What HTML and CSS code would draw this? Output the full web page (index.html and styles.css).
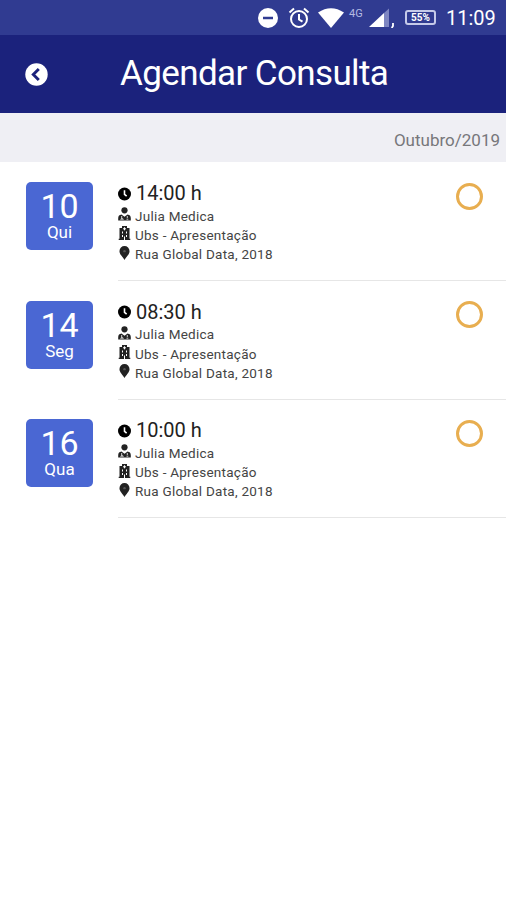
FILE: index.html
```html
<!DOCTYPE html>
<html lang="pt-BR">
<head>
<meta charset="utf-8">
<title>Agendar Consulta</title>
<link rel="stylesheet" href="styles.css">
</head>
<body>
<svg class="defs" width="0" height="0">
  <symbol id="clock" viewBox="0 0 14 14"><circle cx="7" cy="7" r="7"/><path d="M7 3v4.300l2.300 2" fill="none" stroke="#fff" stroke-width="1.700"/></symbol>
  <symbol id="doctor" viewBox="0 0 13 14"><circle cx="6.500" cy="3.300" r="3.100"/><path d="M.2 13.500v-2.300Q.2 8 3.500 7.600l3 2.200 3-2.200q3.300.4 3.300 3.600v2.300z"/><path d="M3.700 9v2.500M3 13v-1.200h2V13M9.300 9v2M8.500 12.200h1.800" fill="none" stroke="#fff" stroke-width=".8"/></symbol>
  <symbol id="hospital" viewBox="0 0 13 14"><path d="M4 0h5v2h2.500v10.800h.8V14H.7v-1.200h.8V2H4z"/><path d="M6.500 1.300v3M5 2.800h3M4.500 5.500v2M8.500 5.500v2M4.500 9v2M8.500 9v2M6.500 10.500V14" fill="none" stroke="#fff" stroke-width="1"/></symbol>
  <symbol id="pin" viewBox="0 0 12 15"><path d="M6 15C4.500 12 .6 9 .6 5.500a5.400 5.400 0 0 1 10.800 0C11.400 9 7.500 12 6 15z"/><circle cx="6" cy="5.500" r="1.300" fill="#555"/></symbol>
</svg>
<div class="status">
  <svg class="dnd" width="20" height="20" viewBox="0 0 20 20"><circle cx="10" cy="10" r="10" fill="#fff"/><path d="M5 10h10" stroke="#303b91" stroke-width="2.500"/></svg>
  <svg class="alarm" width="22" height="22" viewBox="0 0 22 22" fill="none" stroke="#fff" stroke-width="2"><circle cx="11" cy="12" r="8"/><path d="M11 7v5.500l3.500 2.200M1.500 5.500l4.500-4M20.500 5.500l-4.500-4"/></svg>
  <svg class="wifi" width="26" height="20" viewBox="0 0 26 20"><path d="M0 4.500Q13-4 26 4.500L13 20z" fill="#fff"/></svg>
  <span class="net">4G</span>
  <svg class="signal" width="26" height="20" viewBox="0 0 26 20"><path d="M0 19L15 5v14z" fill="#fff"/><path d="M15 5l5-4.500V19h-5z" fill="#7e86c1"/><path d="M24 15v3l-1.300 2" fill="none" stroke="#fff" stroke-width="1.800"/></svg>
  <span class="battery">55%</span>
  <span class="time">11:09</span>
</div>
<header class="bar">
  <svg class="back" width="23" height="23" viewBox="0 0 23 23"><circle cx="11.500" cy="11.500" r="11.200" fill="#fff"/><path d="M13.800 6l-5.500 5.500 5.500 5.500" fill="none" stroke="#1b227c" stroke-width="2.900"/></svg>
  <h1>Agendar Consulta</h1>
</header>
<div class="month"><span>Outubro/2019</span></div>
<main>
  <article class="item">
    <div class="date"><b>10</b><span>Qui</span></div>
    <div class="info">
      <div class="hour"><svg><use href="#clock"/></svg><span>14:00 h</span></div>
      <div class="line who"><svg><use href="#doctor"/></svg><span>Julia Medica</span></div>
      <div class="line unit"><svg><use href="#hospital"/></svg><span>Ubs - Apresentação</span></div>
      <div class="line place"><svg><use href="#pin"/></svg><span>Rua Global Data, 2018</span></div>
      <i class="radio"></i>
    </div>
  </article>
  <article class="item">
    <div class="date"><b>14</b><span>Seg</span></div>
    <div class="info">
      <div class="hour"><svg><use href="#clock"/></svg><span>08:30 h</span></div>
      <div class="line who"><svg><use href="#doctor"/></svg><span>Julia Medica</span></div>
      <div class="line unit"><svg><use href="#hospital"/></svg><span>Ubs - Apresentação</span></div>
      <div class="line place"><svg><use href="#pin"/></svg><span>Rua Global Data, 2018</span></div>
      <i class="radio"></i>
    </div>
  </article>
  <article class="item">
    <div class="date"><b>16</b><span>Qua</span></div>
    <div class="info">
      <div class="hour"><svg><use href="#clock"/></svg><span>10:00 h</span></div>
      <div class="line who"><svg><use href="#doctor"/></svg><span>Julia Medica</span></div>
      <div class="line unit"><svg><use href="#hospital"/></svg><span>Ubs - Apresentação</span></div>
      <div class="line place"><svg><use href="#pin"/></svg><span>Rua Global Data, 2018</span></div>
      <i class="radio"></i>
    </div>
  </article>
</main>
</body>
</html>
```
FILE: styles.css
```css
* { box-sizing: border-box; }
body { margin: 0; background: #fff; font-family: Roboto, "Liberation Sans", sans-serif; color: #222; height: 900px; overflow: hidden; }
.defs { position: absolute; }
.status { height: 35px; background: #303b91; color: #fff; display: flex; align-items: center; padding-left: 258px; }
.status > * { flex: none; }
.alarm { margin-left: 10px; }
.wifi { margin-left: 8px; }
.net { width: 16px; margin: -7px 0 0 5px; font-size: 11px; line-height: 12px; color: #b4bae2; }
.signal { margin-left: 4px; }
.battery { width: 31px; height: 15px; margin-left: 10px; border: 2px solid #c5cae9; border-radius: 3px; font-size: 10px; font-weight: 700; line-height: 11px; text-align: center; }
.time { margin-left: 10px; font-size: 20px; line-height: 36px; padding-top: 1px; }
.bar { height: 78px; background: #1b227c; color: #fff; display: flex; align-items: center; padding-left: 25px; }
h1 { margin: -1px 0 0 72px; font-size: 35px; font-weight: 400; line-height: 42px; white-space: nowrap; letter-spacing: -.62px; }
.month { height: 49px; background: #efeff4; display: flex; align-items: center; justify-content: flex-end; padding: 5px 6px 0 0; font-size: 17px; color: #77777b; }
.item { height: 118.600px; display: flex; padding-left: 26px; }
.date { width: 67px; height: 68px; margin-top: 20px; border-radius: 5px; background: #4a67d3; color: #fff; text-align: center; display: flex; flex-direction: column; padding-top: 8px; }
.date b { font-size: 34px; font-weight: 400; line-height: 33px; }
.date span { font-size: 17px; line-height: 19px; }
.info { flex: 1; height: 119.200px; margin-left: 25px; padding-top: 19px; border-bottom: 1px solid #e6e6e6; position: relative; }
.hour, .line { display: flex; align-items: center; white-space: nowrap; }
.hour { height: 25px; font-size: 20px; }
.hour svg { width: 13px; height: 14px; margin-right: 5px; }
.hour span { margin-top: -1px; }
.line { height: 19.300px; font-size: 13.500px; letter-spacing: .25px; color: #444; }
.line svg { width: 13px; height: 14px; margin-right: 4px; margin-top: -3px; fill: #222; }
.radio { position: absolute; left: 338px; top: 20.500px; width: 27px; height: 27px; border: 3px solid #e8ae50; border-radius: 50%; }
```
